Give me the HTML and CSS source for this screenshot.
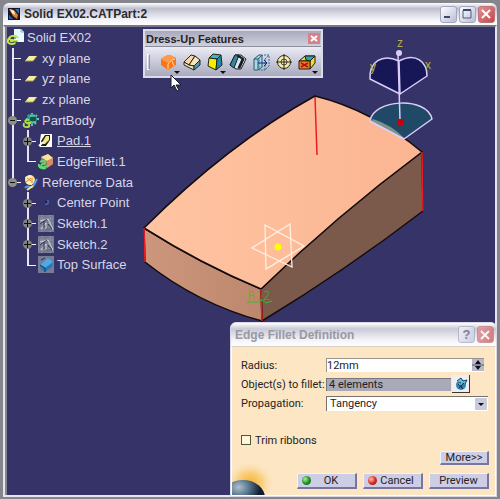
FILE: index.html
```
<!DOCTYPE html>
<html lang="en">
<head>
  <meta charset="UTF-8" />
  <meta name="viewport" content="width=device-width, initial-scale=1" />
  <title>Solid EX02.CATPart:2</title>
  <link rel="stylesheet" href="styles.css">
</head>
<body>

<div class="window">
  <header class="title-bar">
    <svg class="app-icon" width="12" height="12" viewBox="0 0 12 12">
      <rect width="12" height="12" fill="#101830"/>
      <path d="M1 1l5 1 4 5-1 4-4-3z" fill="#e87820"/>
      <path d="M2 1l4 2 1 4-3-2z" fill="#fff4d0"/>
      <path d="M7 1h4v5z" fill="#2c6cb0"/>
      <path d="M1 7l4 4H1z" fill="#2060a8"/>
    </svg>
    <h1>Solid EX02.CATPart:2</h1>
    <div class="window-buttons">
      <button class="win-btn" aria-label="Minimize"><svg width="16" height="16" viewBox="0 0 16 16"><path d="M4 11h6" stroke="#404870" stroke-width="2"/></svg></button>
      <button class="win-btn" aria-label="Maximize"><svg width="16" height="16" viewBox="0 0 16 16"><path d="M4 4.500h8v7.500h-8z" fill="none" stroke="#505878"/><path d="M4 4h8" stroke="#404870" stroke-width="2"/></svg></button>
      <button class="win-btn close" aria-label="Close"><svg width="16" height="16" viewBox="0 0 16 16"><path d="M4 4l8 8M12 4l-8 8" stroke="#fff" stroke-width="2"/></svg></button>
    </div>
  </header>

  <main class="viewport">
    <svg class="scene" viewBox="0 0 488 467" preserveAspectRatio="xMinYMin meet">
      <defs>
        <linearGradient id="topFace" x1="0" y1="0" x2="1" y2="0">
          <stop offset="0" stop-color="#ffc4a2"/>
          <stop offset="1" stop-color="#fbb592"/>
        </linearGradient>
        <linearGradient id="frontFace" x1="0" y1="0" x2="1" y2="0">
          <stop offset="0" stop-color="#cc977d"/>
          <stop offset="1" stop-color="#bd876e"/>
        </linearGradient>
      </defs>
      <g transform="translate(-7 -27)">
        <!-- pad -->
        <g stroke="#140c0c" stroke-width="1.500" stroke-linejoin="round">
          <path d="M422 152Q336 216 261 289L262 321Q346 270 423 211Z" fill="#7b5a4c"/>
          <path d="M144 228Q201 264 261 289L262 321Q198 304 145 262Z" fill="url(#frontFace)"/>
          <path d="M315 96Q372 110 422 152Q336 216 261 289Q201 264 144 228Q228 144 315 96Z" fill="url(#topFace)"/>
        </g>
        <path d="M144 228l1 34M261 289l1 32M422 152l1 59M315 97l2 58" stroke="#ee1c20" stroke-width="1.500" fill="none"/>
        <!-- center point planes -->
        <path d="M265 225L304 246L266 269ZM290 224L252 248L292 267Z" fill="none" stroke="#fff0e4" stroke-width="1.300"/>
        <circle cx="278" cy="247" r="3.500" fill="#ffff00"/>
        <text class="radius-tag" x="247" y="300">R12</text>
        <path d="M247 302h11l4-2 4 3 6-2" stroke="#2cc02c" fill="none"/>
        <!-- compass -->
        <g stroke="#dccdf8" stroke-width="1.500" stroke-linejoin="round">
          <path d="M370 121C373 99 427 96 432 119L404 139Z" fill="#1f4966"/>
          <path d="M371 121l2-2q19 6 31 19z" fill="#7d9388" stroke="none"/>
          <path d="M370 121l34 18" fill="none"/>
          <path d="M400 94L370 79C369 62 382 53 399 61Z" fill="#171757"/>
          <path d="M400 94L427 76C427 62 416 52 399 61Z" fill="#171757"/>
          <path d="M398 54l2 66"/>
        </g>
        <circle cx="399" cy="53" r="3" fill="#dccdf8"/>
        <rect x="397" y="119" width="7" height="7" fill="#c80008"/>
        <g class="axis">
          <text x="397" y="47">z</text>
          <text x="370" y="71">y</text>
          <text x="425" y="69">x</text>
        </g>
      </g>
    </svg>

    <svg class="defs" width="0" height="0">
      <defs>
        <symbol id="plane" viewBox="0 0 18 17"><path d="M3 11l4-5h8l-4 5z" fill="#f4eea0"/><path d="M3 11h8l4-5" fill="none" stroke="#a8a050"/></symbol>
        <symbol id="sketch" viewBox="0 0 18 17">
          <path d="M1 0h16v17H1z" fill="#777b91"/>
          <path d="M1 4h16M1 8h16M1 13h16M5 0v17M13 0v17" stroke="#9da0af" stroke-dasharray="1 1"/>
          <path d="M3 6l8-2 5 10H9V8l-5 6" fill="none" stroke="#d2d5dd"/>
          <path d="M3 9l7-5M7 6v7M11 9l4 5H9" fill="none" stroke="#303850"/>
        </symbol>
        <symbol id="gear" viewBox="0 0 18 17">
          <path d="M10 1v13M4 7h13M6 3l8 9M15 3l-9 9" stroke="#58c8a8" stroke-width="2"/>
          <circle cx="10" cy="7" r="5" fill="#2ba088"/>
          <circle cx="11" cy="7" r="3" fill="#14504c"/>
          <path d="M8 4h5M8 10h6" stroke="#8ce8c0"/>
          <path d="M7 8c-4-1-5 2-2 3s3 4 0 4-4-1-3-4M4 11h5" fill="none" stroke="#a8dc48" stroke-width="2"/>
        </symbol>
      </defs>
    </svg>

    <ul class="tree">
      <li>
        <svg class="icon" viewBox="0 0 18 17"><path d="M7 0h7l3 3v10H7z" fill="#e8fbff"/><path d="M14 0v3h3" fill="none" stroke="#68b8c8"/><path d="M6 7c-4 0-5 4-1 4s4 4 0 4-5-3-4-4M1 12c0-5 8-7 10-3M3 12h8" fill="none" stroke="#c4e848" stroke-width="2"/><path d="M4 9h5M6 13h4" stroke="#38682c"/></svg>
        <span>Solid EX02</span>
      </li>
      <li><i class="guide tee"></i><svg class="icon"><use href="#plane"/></svg><span>xy plane</span></li>
      <li><i class="guide tee"></i><svg class="icon"><use href="#plane"/></svg><span>yz plane</span></li>
      <li><i class="guide tee"></i><svg class="icon"><use href="#plane"/></svg><span>zx plane</span></li>
      <li><i class="guide tee"><b class="node"></b></i><svg class="icon"><use href="#gear"/></svg><span>PartBody</span></li>
      <li>
        <i class="guide line"></i><i class="guide tee"><b class="node plus"></b></i>
        <svg class="icon" viewBox="0 0 18 17"><path d="M4 2h11v13H3V8z" fill="#fff"/><path d="M4 9l4-6h5v5l-4 6H4z" fill="#202010"/><path d="M6 9l3-5h3v4l-4 4H6z" fill="#f0e888"/><path d="M2 14l4-4" stroke="#fff" stroke-width="2"/></svg>
        <span class="current">Pad.1</span>
      </li>
      <li>
        <i class="guide line"></i><i class="guide elbow"></i>
        <svg class="icon" viewBox="0 0 18 17"><path d="M4 4l7-3 5 4v6l-6 4-6-5z" fill="#9b7852"/><path d="M4 4l7-3 5 4-6 3z" fill="#f4e4a0"/><path d="M10 8l6-3v6l-6 4z" fill="#d98b68"/><path d="M3 9c5-3 7 1 3 2s-1 5 4 2M2 11c-1 4 4 5 7 4" fill="none" stroke="#60d870" stroke-width="2"/></svg>
        <span>EdgeFillet.1</span>
      </li>
      <li>
        <i class="guide elbow"><b class="node"></b></i>
        <svg class="icon" viewBox="0 0 18 17"><circle cx="8" cy="6" r="5" fill="#f8dc98"/><path d="M3 3l5-2 4 4-2 6-5-1z" fill="#fff2b8"/><path d="M5 4l4 3M4 8l5-4M10 4v5" stroke="#d87830"/><path d="M3 14c3-4 5 1 8-2s2-4 4-7" fill="none" stroke="#58a0e8" stroke-width="2"/><path d="M5 16l6-4" stroke="#f4e898" stroke-width="2"/></svg>
        <span>Reference Data</span>
      </li>
      <li>
        <i class="guide"></i><i class="guide tee"><b class="node plus"></b></i>
        <svg class="icon" viewBox="0 0 18 17"><path d="M8 7h3v3H8z" fill="#102078"/><path d="M11 6v4H8" fill="none" stroke="#4c88d8"/></svg>
        <span>Center Point</span>
      </li>
      <li><i class="guide"></i><i class="guide tee"><b class="node plus"></b></i><svg class="icon"><use href="#sketch"/></svg><span>Sketch.1</span></li>
      <li><i class="guide"></i><i class="guide tee"><b class="node plus"></b></i><svg class="icon"><use href="#sketch"/></svg><span>Sketch.2</span></li>
      <li>
        <i class="guide"></i><i class="guide elbow"></i>
        <svg class="icon" viewBox="0 0 18 17"><path d="M1 0h16v17H1z" fill="#777b98"/><path d="M3 9l8-7 5 4-1 5-7 5-4-3z" fill="#2878b8"/><path d="M3 9l8-7 5 4-8 6z" fill="#52a8e0"/><path d="M3 9l5 3v4M4 4l4-2" fill="none" stroke="#17385c"/></svg>
        <span>Top Surface</span>
      </li>
    </ul>

    <section class="toolbar">
      <div class="toolbar-title">
        <h2>Dress-Up Features</h2>
        <button class="mini-close" aria-label="Close"><svg width="12" height="11" viewBox="0 0 12 11"><path d="M3 3l6 5M9 3L3 8" stroke="#fff" stroke-width="2"/></svg></button>
      </div>
      <div class="tools">
        <i class="grip"></i>
        <button class="tool menu" aria-label="Edge Fillet"><svg width="18" height="18" viewBox="0 0 18 18"><path d="M1 6q5-4 9-4l6 3v7l-8 5-7-5z" fill="#f87818"/><path d="M1 6q5-4 9-4l6 3q-5 1-8 5z" fill="#ff9a48"/><path d="M8 16v-5q3-5 7-5M12 8l2 5" stroke="#ffe0b0" fill="none"/></svg></button>
        <button class="tool" aria-label="Chamfer"><svg width="18" height="18" viewBox="0 0 18 18"><g stroke="#28241c" stroke-linejoin="round"><path d="M1 9l7-7 4 1-6 9z" fill="#f8d8a0"/><path d="M6 12l6-9 5 4-6 6z" fill="#f6e6bc"/><path d="M1 9l5 3 5 1v4L1 12z" fill="#eee7b4"/><path d="M11 13l6-6v5l-6 5z" fill="#4c9cc0"/></g></svg></button>
        <button class="tool menu" aria-label="Draft Angle"><svg width="18" height="18" viewBox="0 0 18 18"><g stroke="#202418" stroke-linejoin="round"><path d="M3 5l4-4 8 1-4 4z" fill="#48b0c0"/><path d="M3 5l8 1-1 11-8-4z" fill="#f4f000"/><path d="M11 6l4-4 1 10-6 5z" fill="#2688a0"/></g></svg></button>
        <button class="tool" aria-label="Shell"><svg width="18" height="18" viewBox="0 0 18 18"><g stroke="#182028" stroke-linejoin="round"><path d="M1 12L6 2h6l5 4-5 10H7z" fill="#dce4ec"/><path d="M1 12L6 2h4L5 15z" fill="#308898"/><path d="M8 3l5 3-4 9h2l4-9-4-3z" fill="#101418"/></g></svg></button>
        <button class="tool" aria-label="Thickness"><svg width="18" height="18" viewBox="0 0 18 18"><path d="M2 6l5-4h3v12l-4 3H2z" fill="#a8d8e0" stroke="#28586c"/><path d="M6 6v11M2 6h4l4-4" stroke="#28586c" fill="none"/><path d="M7 5l4-3h6v11l-4 4H7zM13 6v11M13 6l4-4" fill="none" stroke="#3070a0" stroke-dasharray="2 1"/><path d="M6 10h9M12 7l3 3-3 3" fill="none" stroke="#182878"/></svg></button>
        <button class="tool" aria-label="Thread/Tap"><svg width="18" height="18" viewBox="0 0 18 18"><circle cx="9" cy="9" r="6.500" fill="#f4eea8" stroke="#282820"/><circle cx="9" cy="9" r="3" fill="none" stroke="#504c38"/><path d="M9 1v16M1 9h16" stroke="#282820"/></svg></button>
        <button class="tool menu" aria-label="Remove Face"><svg width="18" height="18" viewBox="0 0 18 18"><g stroke="#202018" stroke-linejoin="round"><path d="M1 8l6-5h10l-5 5z" fill="#f0dc28"/><path d="M7 3h10l-5 5-4-1z" fill="#2fa4a8"/><path d="M12 8l5-5v7l-5 6z" fill="#f0dc28"/><path d="M1 8h11v8H1z" fill="#f08030"/></g><path d="M3 10l7 4M10 10l-7 4" stroke="#b01808" stroke-width="2"/></svg></button>
      </div>
    </section>

    <svg class="cursor" width="12" height="18" viewBox="0 0 12 18"><path d="M1 1v13l3-3 3 6 2-1-3-5h5z" fill="#fff" stroke="#181828"/></svg>
  </main>

  <form class="dialog">
    <div class="dialog-title">
      <h2>Edge Fillet Definition</h2>
      <button type="button" class="win-btn help" aria-label="Help">?</button>
      <button type="button" class="win-btn close" aria-label="Close"><svg width="16" height="16" viewBox="0 0 16 16"><path d="M4 4l8 8M12 4l-8 8" stroke="#fff" stroke-width="2"/></svg></button>
    </div>
    <div class="dialog-body">
      <svg class="planet" width="44" height="34" viewBox="0 0 44 34">
        <defs>
          <radialGradient id="glow"><stop offset="0" stop-color="#f8b030"/><stop offset="0.5" stop-color="#fad080"/><stop offset="1" stop-color="#fce6c4" stop-opacity="0"/></radialGradient>
          <radialGradient id="globe" cx="0.4" cy="0.2"><stop offset="0" stop-color="#b0c0cc"/><stop offset="0.5" stop-color="#54748c"/><stop offset="1" stop-color="#101c30"/></radialGradient>
        </defs>
        <ellipse cx="18" cy="22" rx="25" ry="22" fill="url(#glow)"/>
        <ellipse cx="11" cy="37" rx="22" ry="18" fill="url(#globe)"/>
      </svg>

      <div class="fields">
        <label for="radius">Radius:</label>
        <div class="spin">
          <input id="radius" type="text" value="12mm">
          <button type="button" class="spin-btn" aria-label="Change radius"><svg width="12" height="12" viewBox="0 0 12 12"><path d="M3 5l3-4 3 4zM3 7h6l-3 4z" fill="#101018"/><path d="M0 6h12" stroke="#50546c"/></svg></button>
        </div>

        <label for="objects">Object(s) to fillet:</label>
        <div class="picker">
          <input id="objects" type="text" value="4 elements" readonly>
          <button type="button" class="pick-btn" aria-label="Edit elements"><svg width="14" height="14" viewBox="0 0 14 14"><circle cx="7" cy="8" r="5" fill="#2888b8"/><path d="M3 4l4-3 2 3 4-1-2 4" fill="#60c8d0" stroke="#183c70"/><path d="M4 7l5 5M10 6l-5 5M6 5l2 6" stroke="#153058"/><path d="M5 7h3" stroke="#a0f0e0"/></svg></button>
        </div>

        <label for="propagation">Propagation:</label>
        <div class="drop">
          <select id="propagation"><option>Tangency</option><option>Minimal</option></select>
          <i class="arrow"></i>
        </div>
      </div>

      <div class="check">
        <input id="trim" type="checkbox">
        <label for="trim">Trim ribbons</label>
      </div>

      <div class="more-row"><button type="button" class="btn more">More&gt;&gt;</button></div>
      <div class="actions">
        <button type="button" class="btn"><i class="ball green"></i><span>OK</span></button>
        <button type="button" class="btn"><i class="ball red"></i><span>Cancel</span></button>
        <button type="button" class="btn"><span>Preview</span></button>
      </div>
    </div>
  </form>
</div>

</body>
</html>
```
FILE: styles.css
```
* {
  box-sizing: border-box;
}
body {
  margin: 0;
  background: #85858c;
  font-family: "Liberation Sans", Arial, sans-serif;
  font-size: 11px;
  color: #26221e;
}
h1, h2 {
  margin: 0;
  font-weight: bold;
}
button, input, select {
  font: inherit;
  color: inherit;
  margin: 0;
  padding: 0;
  border: 0;
  border-radius: 0;
}
svg {
  display: block;
}

/* document window */
.window {
  position: relative;
  display: flex;
  flex-direction: column;
  min-height: 100vh;
  padding: 3px 3px 2px;
}
.title-bar {
  display: flex;
  align-items: center;
  height: 22px;
  padding: 0 2px 0 5px;
  gap: 4px;
  border-radius: 6px 6px 0 0;
  background: linear-gradient(#fff, #bfc0d0 25%, #f2f2f8 75%, #fff);
}
.title-bar h1 {
  flex: 1;
  font-size: 12px;
  color: #2a2a30;
}
.window-buttons {
  display: flex;
  gap: 2px;
}
.win-btn {
  width: 17px;
  height: 17px;
  border: 1px solid #a2a6c0;
  border-radius: 3px;
  background: linear-gradient(135deg, #fff, #b9bdd6);
}
.win-btn svg {
  margin: -1px;
}
.win-btn.close {
  border-color: #bc7078;
  background: linear-gradient(135deg, #e89090, #c84448);
}
.viewport {
  position: relative;
  flex: 1;
  background: #353367;
  border: 2px solid #e6e6f0;
  border-top: 2px solid #77778a;
  box-shadow: inset 2px 0 #85858f;
  padding-left: 2px;
}
.scene {
  position: absolute;
  top: 0;
  left: 2px;
  width: calc(100% - 2px);
}
.defs {
  position: absolute;
}
.radius-tag {
  font-family: "DejaVu Sans", sans-serif;
  font-weight: 200;
  font-size: 12px;
  fill: #2cc02c;
}
.axis {
  font-size: 12px;
  fill: #b8b040;
}
.cursor {
  position: absolute;
  left: 165px;
  top: 47px;
}

/* specification tree */
.tree {
  position: relative;
  display: flex;
  flex-direction: column;
  width: 140px;
  height: 248px;
  margin: 0;
  padding: 0;
  list-style: none;
  font-size: 13px;
  color: #d8d6e6;
}
.tree li {
  flex: 1;
  display: flex;
  align-items: center;
  white-space: nowrap;
}
.tree .icon {
  width: 18px;
  height: 17px;
  margin-right: 2px;
  flex: none;
}
.tree .current {
  text-decoration: underline;
}
.guide {
  position: relative;
  align-self: stretch;
  width: 15px;
  flex: none;
}
.guide.line::before, .guide.tee::before, .guide.elbow::before {
  content: "";
  position: absolute;
  left: 5px;
  top: 0;
  bottom: 0;
  border-left: 2px solid #e4e2f0;
}
.guide.elbow::before {
  bottom: 50%;
}
.guide.tee::after, .guide.elbow::after {
  content: "";
  position: absolute;
  left: 5px;
  top: 50%;
  width: 9px;
  border-top: 1px solid #f4f2ff;
}
.node {
  position: absolute;
  z-index: 1;
  left: 1px;
  top: 50%;
  width: 9px;
  height: 9px;
  margin-top: -4px;
  border-radius: 50%;
  background: linear-gradient(#111, #111) center / 5px 1px no-repeat, #8d8f88;
}
.node.plus {
  background: linear-gradient(#111, #111) center / 7px 1px no-repeat, linear-gradient(#111, #111) center / 1px 7px no-repeat, #80827e;
}

/* floating toolbar */
.toolbar {
  position: absolute;
  left: 138px;
  top: 2px;
  width: 180px;
  border: 2px solid #dcdce8;
  background: #b9bacb;
}
.toolbar-title {
  display: flex;
  align-items: center;
  justify-content: space-between;
  height: 15px;
  padding: 0 1px;
  background: linear-gradient(#a9aabd, #d0d0dd);
}
.toolbar-title h2 {
  font-size: 11px;
}
.mini-close {
  width: 12px;
  height: 11px;
  background: #d98088;
}
.tools {
  display: flex;
  align-items: center;
  height: 30px;
  padding: 0 2px;
  gap: 5px;
  border-top: 1px solid #8b8c9c;
  background: linear-gradient(#ececf4, #c9cadb 50%, #a9aabb);
}
.grip {
  width: 3px;
  height: 16px;
  margin-right: 5px;
  border: 1px solid #fff;
  border-right-color: #8f90a4;
}
.tool {
  position: relative;
  width: 18px;
  height: 18px;
  background: none;
}
.tool.menu::after {
  content: "";
  position: absolute;
  right: -2px;
  bottom: -3px;
  border: 3px solid transparent;
  border-top-color: #111;
  border-bottom: 0;
}

/* edge fillet dialog */
.dialog {
  position: absolute;
  right: 3px;
  bottom: 2px;
  width: 267px;
  border: 1px solid #d8d8e6;
  border-radius: 6px 6px 0 0;
  background: #fce6c4;
  overflow: hidden;
}
.dialog-title {
  display: flex;
  align-items: center;
  gap: 2px;
  height: 23px;
  padding: 0 2px 0 4px;
  background: linear-gradient(#fff, #c9cad6 25%, #f4f4f8 75%, #fff);
}
.dialog-title h2 {
  flex: 1;
  font-size: 12px;
  color: #9899a3;
}
.dialog .win-btn {
  opacity: 0.7;
}
.win-btn.help {
  font-size: 13px;
  font-weight: bold;
  line-height: 15px;
  color: #555a78;
}
.dialog-body {
  position: relative;
  padding: 9px 6px 6px 9px;
  border: 1px solid #fff;
  border-top-color: #d8d0c4;
  font-family: Roboto, "Liberation Sans", sans-serif;
}
.planet {
  position: absolute;
  left: 0;
  bottom: 0;
}
.fields {
  display: grid;
  grid-template-columns: 85px 1fr;
  grid-auto-rows: 18px;
  row-gap: 1px;
  align-items: center;
}
.fields label {
  white-space: nowrap;
}
.spin {
  display: flex;
  height: 14px;
  margin-right: 5px;
  background: #fff;
  border-top: 1px solid #99948c;
  border-left: 1px solid #99948c;
}
.spin input {
  flex: 1;
  min-width: 0;
  line-height: 12px;
  background: none;
}
.spin-btn {
  width: 12px;
  height: 12px;
  background: #b8bacb;
}
.picker {
  display: flex;
  align-items: center;
  gap: 1px;
}
.picker input {
  width: 125px;
  height: 13px;
  padding-left: 2px;
  background: #a9a9b8;
  border-top: 1px solid #77777f;
  border-left: 1px solid #77777f;
}
.pick-btn {
  display: flex;
  align-items: center;
  justify-content: center;
  width: 18px;
  height: 18px;
  background: #f1edf0;
  border-right: 1px solid #3a3632;
  border-bottom: 1px solid #3a3632;
}
.drop {
  position: relative;
  margin-right: 1px;
}
.drop select {
  display: block;
  width: 100%;
  height: 15px;
  padding-left: 3px;
  appearance: none;
  background: #fff;
  border-top: 1px solid #77736c;
  border-left: 1px solid #77736c;
}
.arrow {
  position: absolute;
  right: 1px;
  top: 2px;
  width: 12px;
  height: 12px;
  background: #c9cadc;
  pointer-events: none;
}
.arrow::after {
  content: "";
  position: absolute;
  left: 3px;
  top: 5px;
  border: 3px solid transparent;
  border-top-color: #111;
  border-bottom: 0;
}
.check {
  display: flex;
  align-items: center;
  gap: 4px;
  height: 14px;
  margin-top: 21px;
}
.check input {
  appearance: none;
  width: 10px;
  height: 10px;
  border: 1px solid #4c5838;
  background: #fff6dc;
}
.more-row {
  display: flex;
  justify-content: flex-end;
  margin: 4px 0 8px;
}
.actions {
  position: relative;
  display: flex;
  justify-content: flex-end;
  gap: 6px;
}
.btn {
  display: flex;
  align-items: center;
  width: 60px;
  height: 16px;
  padding: 0 4px;
  background: #cdcde6;
  border: 1px solid #f2f2fc;
  border-right: 2px solid #77779a;
  border-bottom: 2px solid #77779a;
}
.btn span {
  flex: 1;
  text-align: center;
}
.btn.more {
  width: 49px;
  height: 14px;
  justify-content: center;
  padding: 0;
}
.ball {
  width: 9px;
  height: 9px;
  border-radius: 50%;
}
.ball.green {
  background: radial-gradient(circle at 35% 35%, #b0f0a0, #209428 50%, #0c4c14);
}
.ball.red {
  background: radial-gradient(circle at 35% 35%, #ffc0b0, #d83024 50%, #701008);
}
```
